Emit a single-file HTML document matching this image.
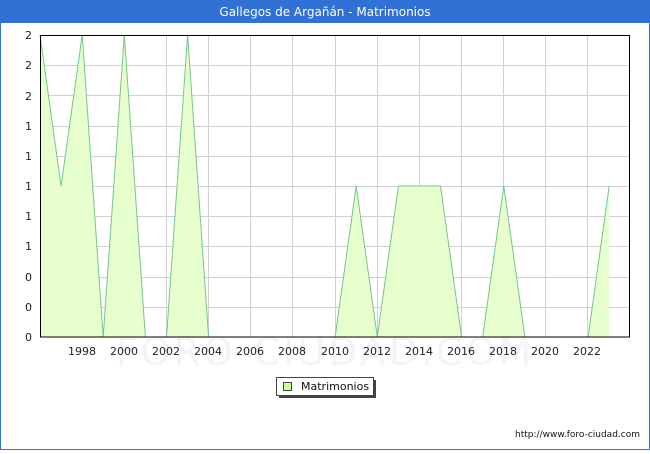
<!DOCTYPE html>
<html><head><style>
body{margin:0;width:650px;height:450px;overflow:hidden;background:#fff;font-family:"DejaVu Sans","Liberation Sans",sans-serif;}
</style></head><body>
<svg width="650" height="450" xmlns="http://www.w3.org/2000/svg" font-family="DejaVu Sans, Liberation Sans, sans-serif">
<rect x="0.5" y="0.5" width="649" height="449" fill="#fff" stroke="#3170d4"/>
<rect x="0" y="0" width="650" height="23" fill="#3170d4"/>
<text x="325" y="16" fill="#fff" font-size="12" text-anchor="middle">Gallegos de Argañán - Matrimonios</text>
<text x="325" y="365" fill="#f4f4f8" font-size="38" text-anchor="middle" letter-spacing="3">FORO-CIUDAD.COM</text>
<g stroke="#d0d0d0" stroke-width="1">
<line x1="40" y1="65.5" x2="630" y2="65.5"/><line x1="40" y1="95.5" x2="630" y2="95.5"/><line x1="40" y1="126.5" x2="630" y2="126.5"/><line x1="40" y1="156.5" x2="630" y2="156.5"/><line x1="40" y1="186.5" x2="630" y2="186.5"/><line x1="40" y1="216.5" x2="630" y2="216.5"/><line x1="40" y1="246.5" x2="630" y2="246.5"/><line x1="40" y1="277.5" x2="630" y2="277.5"/><line x1="40" y1="307.5" x2="630" y2="307.5"/>
<line x1="82.5" y1="35" x2="82.5" y2="337"/><line x1="124.5" y1="35" x2="124.5" y2="337"/><line x1="166.5" y1="35" x2="166.5" y2="337"/><line x1="208.5" y1="35" x2="208.5" y2="337"/><line x1="250.5" y1="35" x2="250.5" y2="337"/><line x1="292.5" y1="35" x2="292.5" y2="337"/><line x1="335.5" y1="35" x2="335.5" y2="337"/><line x1="377.5" y1="35" x2="377.5" y2="337"/><line x1="419.5" y1="35" x2="419.5" y2="337"/><line x1="461.5" y1="35" x2="461.5" y2="337"/><line x1="503.5" y1="35" x2="503.5" y2="337"/><line x1="545.5" y1="35" x2="545.5" y2="337"/><line x1="587.5" y1="35" x2="587.5" y2="337"/>
</g>
<polygon fill="#e6ffcc" stroke="none" points="40,337 40,35 61.1,186 82.2,35 103.2,337 124.3,35 145.4,337 166.5,337 187.6,35 208.6,337 335.1,337 356.2,186 377.3,337 398.4,186 419.4,186 440.5,186 461.6,337 482.7,337 503.8,186 524.9,337 588.1,337 609.2,186 609.2,337"/>
<polyline fill="none" stroke="#77c48f" stroke-width="1" points="40,35 61.1,186 82.2,35 103.2,337 124.3,35 145.4,337 166.5,337 187.6,35 208.6,337 335.1,337 356.2,186 377.3,337 398.4,186 419.4,186 440.5,186 461.6,337 482.7,337 503.8,186 524.9,337 588.1,337 609.2,186"/>
<rect x="40.5" y="35.5" width="589" height="301.5" fill="none" stroke="#000"/>
<g font-size="11" fill="#222" text-anchor="end">
<text x="32" y="39">2</text><text x="32" y="69">2</text><text x="32" y="100">2</text><text x="32" y="130">1</text><text x="32" y="160">1</text><text x="32" y="190">1</text><text x="32" y="220">1</text><text x="32" y="250">1</text><text x="32" y="281">0</text><text x="32" y="311">0</text><text x="32" y="341">0</text>
</g>
<g font-size="11" fill="#222" text-anchor="middle">
<text x="82" y="355">1998</text><text x="124" y="355">2000</text><text x="166" y="355">2002</text><text x="208" y="355">2004</text><text x="250" y="355">2006</text><text x="292" y="355">2008</text><text x="335" y="355">2010</text><text x="377" y="355">2012</text><text x="419" y="355">2014</text><text x="461" y="355">2016</text><text x="503" y="355">2018</text><text x="545" y="355">2020</text><text x="587" y="355">2022</text>
</g>
<rect x="279" y="380" width="97" height="18" fill="#444"/>
<rect x="276.5" y="377.5" width="97" height="18" fill="#fff" stroke="#444"/>
<rect x="283.5" y="382.5" width="8" height="8" fill="#ccff99" stroke="#444"/>
<text x="301" y="390" font-size="11" fill="#111">Matrimonios</text>
<text x="640" y="437" font-size="9" fill="#111" text-anchor="end">http://www.foro-ciudad.com</text>
</svg>
</body></html>
